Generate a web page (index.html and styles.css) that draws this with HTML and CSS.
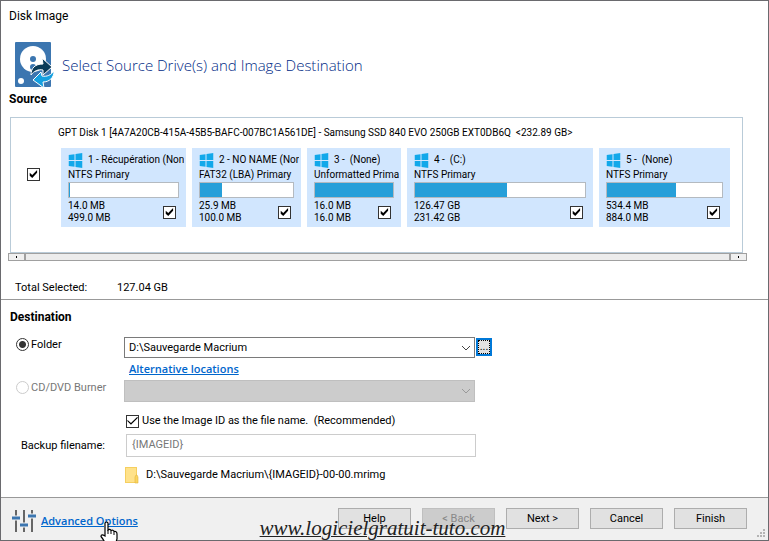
FILE: index.html
```html
<!DOCTYPE html>
<html lang="en">
<head>
    <meta charset="UTF-8">
    <meta name="viewport" content="width=device-width, initial-scale=1.0">
    <title>Disk Image</title>
    <link rel="stylesheet" href="styles.css">
</head>
<body>

<form class="dialog">

<div class="titlebar">Disk Image</div>

<header class="header">
    <svg class="disk-icon" width="40" height="48" viewBox="0 0 40 48">
        <rect x="0" y="1" width="36" height="45" rx="1" fill="#3c76b0"/>
        <circle cx="18" cy="18" r="13" fill="#fff"/>
        <circle cx="18" cy="18" r="3" fill="#3c76b0"/>
        <circle cx="18" cy="26" r="3" fill="#3c76b0"/>
        <circle cx="6" cy="40" r="3" fill="#fff"/>
        <path d="M16 34 C16 27 20 23 28 23 L27 17 L37 26 L28 34 L28 29 C23 28 19 30 16 34 Z" fill="#0b3b58" stroke="#fff" stroke-width="1"/>
        <path d="M39 30 C39 37 34 41 28 41 L29 47 L18 39 L26 31 L27 35 C32 36 36 34 39 30 Z" fill="#14a0e0" stroke="#fff" stroke-width="1"/>
    </svg>
    <h1>Select Source Drive(s) and Image Destination</h1>
</header>

<section class="source">
    <h2>Source</h2>
    <div class="disk-panel">
        <input type="checkbox" class="check" aria-label="Disk 1" checked>
        <div class="disk">
            <p class="disk-name">GPT Disk 1 [4A7A20CB-415A-45B5-BAFC-007BC1A561DE] - Samsung SSD 840 EVO 250GB EXT0DB6Q&nbsp; &lt;232.89 GB&gt;</p>
            <div class="partitions">
                <div class="partition p1">
                    <div class="name"><svg class="win" viewBox="0 0 14 15"><use href="#winlogo"/></svg><label for="part1">1 - Récupération (None)</label></div>
                    <div class="type">NTFS Primary</div>
                    <div class="usage"><div class="used" style="width: 1%"></div></div>
                    <div class="sizes"><div>14.0 MB<br>499.0 MB</div><input type="checkbox" class="check" id="part1" checked></div>
                </div>
                <div class="partition p2">
                    <div class="name"><svg class="win" viewBox="0 0 14 15"><use href="#winlogo"/></svg><label for="part2">2 - NO NAME (None)</label></div>
                    <div class="type">FAT32 (LBA) Primary</div>
                    <div class="usage"><div class="used" style="width: 24%"></div></div>
                    <div class="sizes"><div>25.9 MB<br>100.0 MB</div><input type="checkbox" class="check" id="part2" checked></div>
                </div>
                <div class="partition p3">
                    <div class="name"><svg class="win" viewBox="0 0 14 15"><use href="#winlogo"/></svg><label for="part3">3 -&nbsp; (None)</label></div>
                    <div class="type">Unformatted Primary</div>
                    <div class="usage"><div class="used" style="width: 100%"></div></div>
                    <div class="sizes"><div>16.0 MB<br>16.0 MB</div><input type="checkbox" class="check" id="part3" checked></div>
                </div>
                <div class="partition p4">
                    <div class="name"><svg class="win" viewBox="0 0 14 15"><use href="#winlogo"/></svg><label for="part4">4 -&nbsp; (C:)</label></div>
                    <div class="type">NTFS Primary</div>
                    <div class="usage"><div class="used" style="width: 54%"></div></div>
                    <div class="sizes"><div>126.47 GB<br>231.42 GB</div><input type="checkbox" class="check" id="part4" checked></div>
                </div>
                <div class="partition p5">
                    <div class="name"><svg class="win" viewBox="0 0 14 15"><use href="#winlogo"/></svg><label for="part5">5 -&nbsp; (None)</label></div>
                    <div class="type">NTFS Primary</div>
                    <div class="usage"><div class="used" style="width: 60%"></div></div>
                    <div class="sizes"><div>534.4 MB<br>884.0 MB</div><input type="checkbox" class="check" id="part5" checked></div>
                </div>
            </div>
        </div>
    </div>
    <div class="scrollbar">
        <button type="button" class="scroll-btn" aria-label="Scroll left"></button>
        <div class="track"></div>
        <button type="button" class="scroll-btn" aria-label="Scroll right"></button>
    </div>
    <div class="total"><span class="total-label">Total Selected:</span><span>127.04 GB</span></div>
</section>

<section class="destination">
    <h2>Destination</h2>

    <div class="row folder-row">
        <div class="choice">
            <input type="radio" class="radio" name="dest" id="folder" checked>
            <label for="folder">Folder</label>
        </div>
        <div class="combo">
            <select aria-label="Destination folder"><option>D:\Sauvegarde Macrium</option></select>
            <svg class="chevron" viewBox="0 0 10 6"><path d="M1 1 L5 5 L9 1"/></svg>
        </div>
        <button type="button" class="browse"><span>...</span></button>
    </div>

    <a href="#" class="alt-link">Alternative locations</a>

    <div class="row burner-row">
        <div class="choice disabled">
            <input type="radio" class="radio" name="dest" id="burner" disabled>
            <label for="burner">CD/DVD Burner</label>
        </div>
        <div class="combo disabled">
            <select aria-label="Burner drive" disabled></select>
            <svg class="chevron" viewBox="0 0 10 6"><path d="M1 1 L5 5 L9 1"/></svg>
        </div>
    </div>

    <div class="use-id">
        <input type="checkbox" class="check thin" id="useid" checked>
        <label for="useid">Use the Image ID as the file name.&nbsp; (Recommended)</label>
    </div>

    <div class="row file-row">
        <label for="filename" class="file-label">Backup filename:</label>
        <input type="text" class="filename" id="filename" value="{IMAGEID}" disabled>
    </div>

    <div class="path">
        <svg width="14" height="17" viewBox="0 0 14 17">
            <rect x="0" y="0" width="12" height="16" fill="#f5cf60"/>
            <rect x="1" y="1" width="10" height="14" fill="#ffe28a"/>
            <path d="M10 16 V10 L11 8 H12 L13 10 V16 Z" fill="#fbd560" stroke="#e3b53c" stroke-width=".6"/>
        </svg>
        <span>D:\Sauvegarde Macrium\{IMAGEID}-00-00.mrimg</span>
    </div>
</section>

<footer class="footer">
    <div class="advanced">
        <svg width="24" height="24" viewBox="0 0 24 24">
            <path d="M4 1 V23 M12 1 V23 M20 1 V23" stroke="#666" stroke-width="2"/>
            <path d="M0 9 H8 M8 16 H16 M16 7 H24" stroke="#f0f0f0" stroke-width="5"/>
            <path d="M0 9 H8 M8 16 H16 M16 7 H24" stroke="#3c76b0" stroke-width="3"/>
        </svg>
        <a href="#">Advanced Options</a>
        <svg class="cursor" width="18" height="24" viewBox="0 0 18 24">
            <path d="M5 2 Q6.500 0 8 2 V9 Q10 7.500 11 9.500 Q13 8.500 14 10.500 Q17 10 17 13 V18 L15 24 H6 Q4 19 1 15.500 Q1 12.500 5 15 Z" fill="#fff" stroke="#000" stroke-width="1.2"/>
            <path d="M8 9 V13 M11 10 V13 M14 11 V14" fill="none" stroke="#000" stroke-width="1"/>
        </svg>
    </div>
    <div class="buttons">
        <button type="button">Help</button>
        <button type="button" disabled>&lt; Back</button>
        <button type="button">Next &gt;</button>
        <button type="button">Cancel</button>
        <button type="button">Finish</button>
    </div>
    <div class="watermark"><span>www.logicielgratuit-tuto.com</span></div>
    <svg class="grip" width="8" height="8" viewBox="0 0 8 8">
        <path d="M6 0h2v2h-2z M3 3h2v2h-2z M6 3h2v2h-2z M0 6h2v2h-2z M3 6h2v2h-2z M6 6h2v2h-2z" fill="#b4b4b4"/>
    </svg>
</footer>

</form>

<svg class="defs" aria-hidden="true">
    <symbol id="winlogo" viewBox="0 0 14 15">
        <path d="M0 2 L6 1.200 V7 H0 Z M7 1 L14 0 V7 H7 Z M0 8 H6 V13.800 L0 13 Z M7 8 H14 V15 L7 14 Z" fill="#12a8ea"/>
    </symbol>
</svg>

</body>
</html>
```
FILE: styles.css
```css
*{
    padding: 0;
    margin: 0;
    box-sizing: border-box;
}

body{
    background-color: #fff;
    color: #000;
    font-family: Roboto, "Noto Sans", sans-serif;
    font-size: 11px;
    line-height: 16px;
}

button, input, select{
    font-family: inherit;
    font-size: inherit;
}

h1{
    font-family: "Open Sans", sans-serif;
    font-size: 15px;
    font-weight: 300;
    line-height: 26px;
    color: #002a85;
}

h2{
    font-size: 12px;
    font-weight: 700;
    line-height: 16px;
}

a{
    color: #0066cc;
    text-decoration: underline;
}

.defs{
    display: none;
}

.dialog{
    display: flex;
    flex-direction: column;
    min-height: 100vh;
    border: 1px solid #6a6a6e;
}

.titlebar{
    padding: 7px 8px;
    font-size: 12px;
}

.header{
    display: flex;
    align-items: center;
    gap: 7px;
    padding: 10px 14px 0;
}

/* source */
.source{
    padding-bottom: 3px;
    border-bottom: 1px solid #999;
}

.source h2{
    margin: 2px 8px 10px;
}

.disk-panel{
    display: flex;
    align-items: center;
    gap: 21px;
    height: 136px;
    margin: 0 25px 0 9px;
    padding: 0 12px 0 16px;
    border: 1px solid #b9cbd8;
    font-size: 10px;
}

.disk{
    flex: 1;
    min-width: 0;
    height: 100%;
    padding-top: 7px;
}

.disk-panel > .check{
    margin-bottom: 22px;
}

.disk-name{
    margin-bottom: 7px;
    margin-left: -3px;
    white-space: nowrap;
}

.partitions{
    display: flex;
    gap: 6px;
}

.partition{
    min-width: 0;
    height: 79px;
    padding: 4px 7px 0;
    background-color: #d1e6fe;
    white-space: nowrap;
    overflow: hidden;
}

.p1{ flex: 125 1 125px; }
.p2{ flex: 109 1 109px; }
.p3{ flex: 94 1 94px; }
.p4{ flex: 186 1 186px; }
.p5{ flex: 131 1 131px; }

.name{
    display: flex;
    align-items: center;
    gap: 5px;
    margin-right: -5px;
    overflow: hidden;
}

.name label{
    overflow: hidden;
}

.win{
    flex: none;
    width: 15px;
    height: 15px;
}

.type{
    line-height: 14px;
    margin-right: -5px;
    overflow: hidden;
}

.usage{
    height: 16px;
    border: 1px solid #b4bac0;
    background-color: #fff;
}

.used{
    height: 100%;
    background-color: #269fd9;
}

.sizes{
    display: flex;
    justify-content: space-between;
    align-items: center;
    padding: 2px 3px 0 0;
    line-height: 12px;
}

.check{
    appearance: none;
    flex: none;
    display: grid;
    place-items: center;
    width: 13px;
    height: 13px;
    border: 1px solid #333;
    background-color: #fff;
}

.check:checked::before{
    content: "";
    width: 9px;
    height: 8px;
    background-color: #000;
    clip-path: polygon(8% 35%, 36% 62%, 90% 0, 90% 34%, 36% 100%, 8% 72%);
}

.check.thin:checked::before{
    width: 11px;
    clip-path: polygon(0 48%, 8% 40%, 36% 76%, 92% 0, 100% 10%, 36% 96%);
}

.scrollbar{
    display: flex;
    height: 8px;
    margin: 0 21px 19px 7px;
}

.scroll-btn{
    width: 17px;
    border: 1px solid #a0a0a0;
    background: radial-gradient(circle, #000 1px, #f0f0f0 1px);
}

.track{
    flex: 1;
    border: 1px solid #a0a0a0;
    background-color: #ececec;
}

.total{
    display: flex;
    padding-left: 14px;
}

.total-label{
    width: 102px;
}

/* destination */
.destination{
    flex: 1;
    padding-bottom: 10px;
}

.destination h2{
    margin: 9px 9px 12px;
}

.row{
    display: flex;
    padding-left: 15px;
}

.choice{
    display: flex;
    width: 108px;
    gap: 2px;
}

.choice.disabled{
    color: #777;
}

.radio{
    appearance: none;
    width: 13px;
    height: 13px;
    margin-top: 1px;
    border: 1px solid #333;
    border-radius: 50%;
    background-color: #fff;
}

.radio:checked{
    background: radial-gradient(circle, #333 3px, #fff 4px);
}

.radio:disabled{
    border-color: #ccc;
}

.combo{
    position: relative;
    flex: 0 1 351px;
    height: 21px;
}

.combo select{
    appearance: none;
    display: block;
    width: 100%;
    height: 100%;
    padding: 0 24px 0 4px;
    border: 1px solid #7a7a7a;
    border-radius: 0;
    background-color: #fff;
    color: #000;
}

.combo.disabled{
    height: 22px;
}

.combo.disabled select{
    border-color: #bfbfbf;
    background-color: #ccc;
    opacity: 1;
}

.chevron{
    position: absolute;
    right: 4px;
    top: 8px;
    width: 10px;
    height: 6px;
    fill: none;
    stroke: #444;
    pointer-events: none;
}

.combo.disabled .chevron{
    stroke: #999;
}

.browse{
    width: 16px;
    height: 18px;
    margin: 1px;
    border: 2px solid #0078d7;
    background-color: #e1e1e1;
}

.browse span{
    display: block;
    height: 14px;
    line-height: 12px;
    border: 1px dotted #000;
}

.alt-link{
    display: block;
    width: max-content;
    margin: 3px 0 3px 128px;
    font-family: "Open Sans", sans-serif;
    font-weight: 600;
}

.use-id{
    display: flex;
    align-items: center;
    gap: 3px;
    margin: 11px 0 5px 125px;
}

.file-row{
    padding-left: 20px;
}

.file-label{
    width: 105px;
    padding-top: 4px;
}

.filename{
    flex: 0 1 350px;
    height: 23px;
    min-width: 0;
    padding: 0 5px 3px;
    border: 1px solid #ccc;
    background-color: #fff;
    color: #777;
}

.path{
    display: flex;
    gap: 7px;
    margin: 10px 0 0 124px;
}

/* footer */
.footer{
    position: relative;
    display: flex;
    justify-content: space-between;
    height: 43px;
    padding: 10px 21px 0 11px;
    border-top: 1px solid #999;
    background-color: #f0f0f0;
}

.advanced{
    position: relative;
    display: flex;
    align-items: center;
    gap: 5px;
    height: 26px;
}

.advanced a{
    font-family: "Open Sans", sans-serif;
    font-weight: 600;
}

.cursor{
    position: absolute;
    left: 88px;
    top: 13px;
}

.buttons{
    display: flex;
    gap: 11px;
}

.buttons button{
    width: 73px;
    height: 21px;
    border: 1px solid #adadad;
    background-color: #e1e1e1;
    color: #000;
}

.buttons button:disabled{
    border-color: #bfbfbf;
    background-color: #ccc;
    color: #888;
}

.watermark{
    position: absolute;
    left: 0;
    right: 4px;
    bottom: 0;
    text-align: center;
    font-family: "Liberation Serif", serif;
    font-style: italic;
    font-size: 21px;
    line-height: 24px;
    color: #222;
    pointer-events: none;
}

.watermark span{
    text-decoration: underline;
    text-decoration-thickness: 1px;
}

.grip{
    position: absolute;
    right: 3px;
    bottom: 3px;
}
```
